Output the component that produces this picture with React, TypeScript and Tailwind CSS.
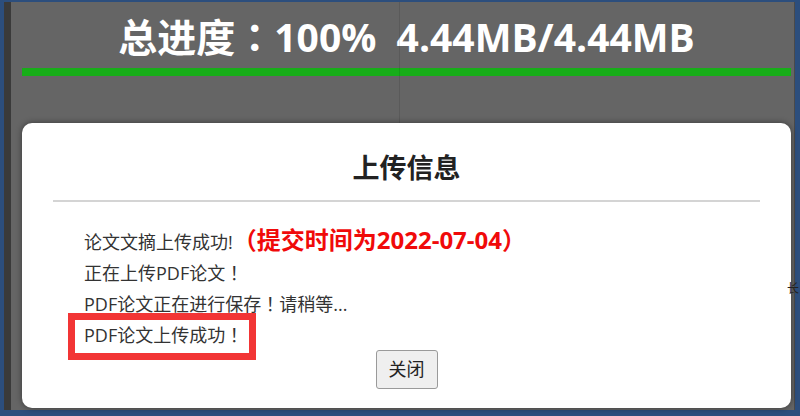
import React from 'react';

const tc = { fontFamily: '"Noto Sans CJK TC", sans-serif' };

export default function App() {
  return (
    <div
      className="flex h-[416px] w-[800px] bg-[#2c4e7d] pt-[2px] pb-[6px] pl-[4px] pr-[5px]"
      style={{ fontFamily: '"Open Sans", "Noto Sans CJK SC", sans-serif' }}
    >
      <div className="w-[7px] bg-[#3a3a3a]" />
      <div className="relative flex flex-1 flex-col bg-[#656565] pl-[11px] pr-[3px] border-r border-[#4a4a4a]">
        {/* faint divider behind the overlay */}
        <div className="absolute left-[388px] top-0 h-[121px] w-px bg-black/10" />

        <div className="flex h-[66px] items-center justify-center pt-[2px]">
          <h1 className="text-[39px] font-bold leading-none text-white">
            总进度<span style={tc}>：</span>100%&nbsp;&nbsp;4.44MB/4.44MB
          </h1>
        </div>
        <div className="h-[8px] bg-[#17ad19]" />

        {/* dialog */}
        <div className="relative mt-[47px] flex h-[285px] flex-col rounded-[10px] bg-white px-[31px] shadow-[0_0_6px_rgba(0,0,0,0.45)]">
          <h2 className="pt-[27px] pb-[15px] text-center text-[27px] font-bold leading-[35px] text-[#222]">
            上传信息
          </h2>
          <div className="h-[2px] bg-[#d4d4d4]" />

          <div className="pl-[31px] pt-[25px] text-[18px] leading-[30px] text-[#333]">
            <p className="flex h-[30px] items-baseline">
              <span>论文文摘上传成功!</span>
              <span className="text-[24px] font-bold leading-[24px] text-[#f00a0a]">
                <span style={tc}>（</span>提交时间为2022-07-04<span style={tc}>）</span>
              </span>
            </p>
            <p>
              正在上传PDF论文<span style={tc}>！</span>
            </p>
            <p>
              PDF论文正在进行保存<span style={tc}>！</span>请稍等...
            </p>
            <p>
              PDF论文上传成功<span style={tc}>！</span>
            </p>
          </div>

          <div className="flex justify-center">
            <button className="h-[39px] w-[62px] rounded-[3px] border border-[#9a9a9a] bg-[#efefef] text-[18px] text-[#222]">
              关闭
            </button>
          </div>

          {/* annotation box */}
          <div className="absolute left-[46px] top-[190px] h-[47px] w-[188px] border-[7px] border-[#f23535]" />
        </div>

        {/* edge of page content peeking out */}
        <span className="absolute right-[-5px] top-[281px] text-[12px] leading-none text-[#222]">长</span>
      </div>
    </div>
  );
}
